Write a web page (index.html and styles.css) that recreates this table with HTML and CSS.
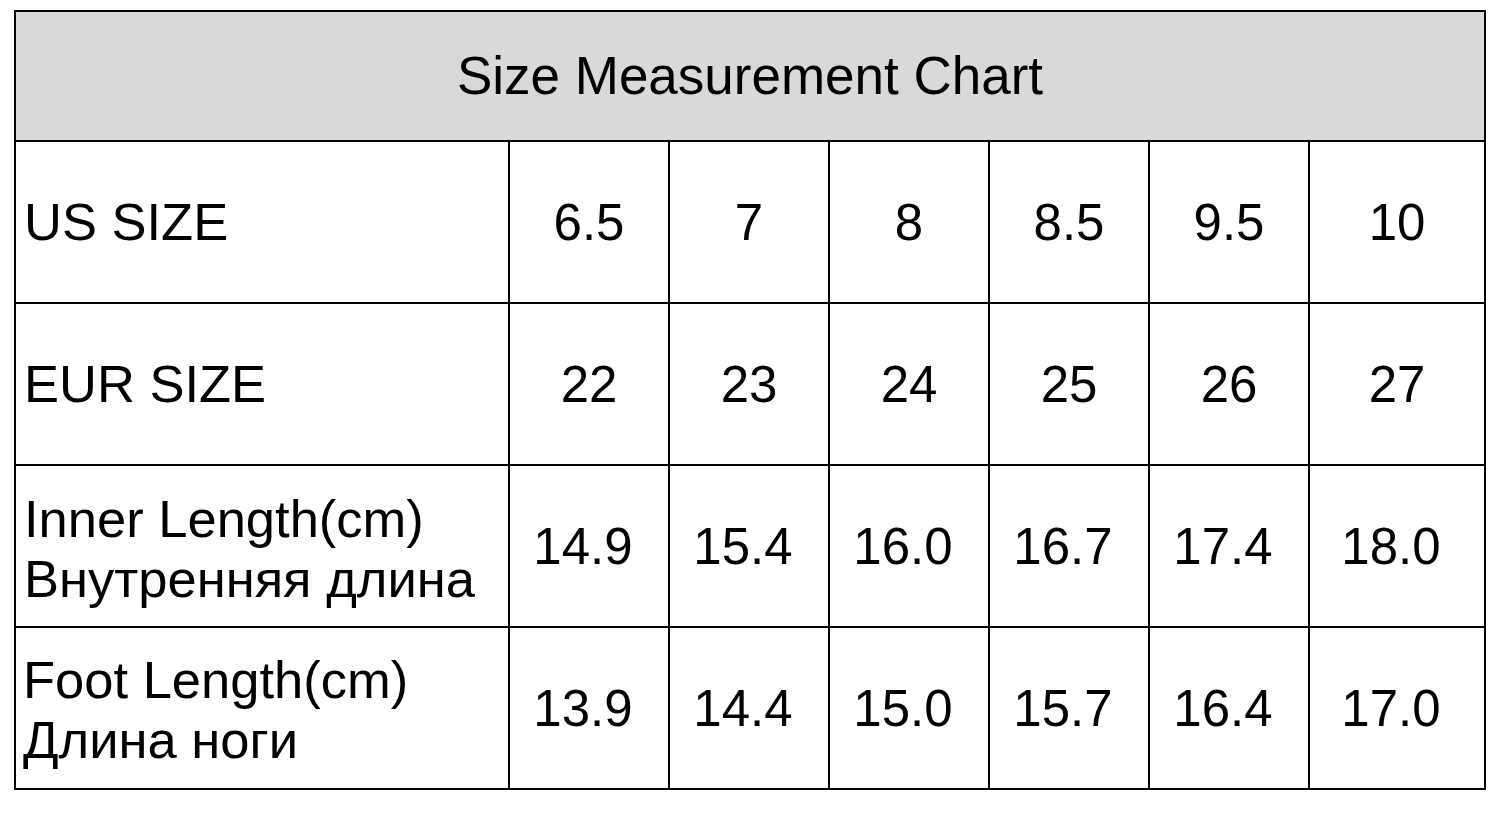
FILE: index.html
```html
<!DOCTYPE html>
<html lang="en">
<head>
<meta charset="utf-8">
<title>Size Measurement Chart</title>
<link rel="stylesheet" href="styles.css">
</head>
<body>
<div class="chart">
  <div class="title">Size Measurement Chart</div>

  <div class="label">US SIZE</div>
  <div class="val">6.5</div>
  <div class="val">7</div>
  <div class="val">8</div>
  <div class="val">8.5</div>
  <div class="val">9.5</div>
  <div class="val">10</div>

  <div class="label">EUR SIZE</div>
  <div class="val">22</div>
  <div class="val">23</div>
  <div class="val">24</div>
  <div class="val">25</div>
  <div class="val">26</div>
  <div class="val">27</div>

  <div class="label two inner">Inner Length(cm)<br>Внутренняя длина</div>
  <div class="val dec">14.9</div>
  <div class="val dec">15.4</div>
  <div class="val dec">16.0</div>
  <div class="val dec">16.7</div>
  <div class="val dec">17.4</div>
  <div class="val dec">18.0</div>

  <div class="label two foot">Foot Length(cm)<br>Длина ноги</div>
  <div class="val dec">13.9</div>
  <div class="val dec">14.4</div>
  <div class="val dec">15.0</div>
  <div class="val dec">15.7</div>
  <div class="val dec">16.4</div>
  <div class="val dec">17.0</div>
</div>
</body>
</html>
```

FILE: styles.css
```css
html, body {
  margin: 0;
  padding: 0;
  background: #ffffff;
}

body {
  padding: 10px 0 0 14px;
  font-family: "Liberation Sans", Arial, sans-serif;
  color: #000000;
}

.chart {
  display: grid;
  width: 1468px;
  grid-template-columns: 492px repeat(5, 158px) 174px;
  grid-template-rows: 128px repeat(4, 160px);
  gap: 2px;
  padding: 2px;
  background: #000000;
}

.chart > div {
  background: #ffffff;
  display: flex;
  align-items: center;
}

.title {
  grid-column: 1 / -1;
  background: #d9d9d9 !important;
  justify-content: center;
  font-size: 53px;
  padding-bottom: 2px;
}

.label {
  font-size: 52.5px;
  padding-left: 8px;
  line-height: 60px;
}

.label.inner {
  padding-top: 6px;
}

.label.foot {
  padding-left: 7px;
  padding-top: 4px;
}

.val {
  justify-content: center;
  font-size: 51px;
}

.val.dec {
  padding-right: 12px;
}
```
